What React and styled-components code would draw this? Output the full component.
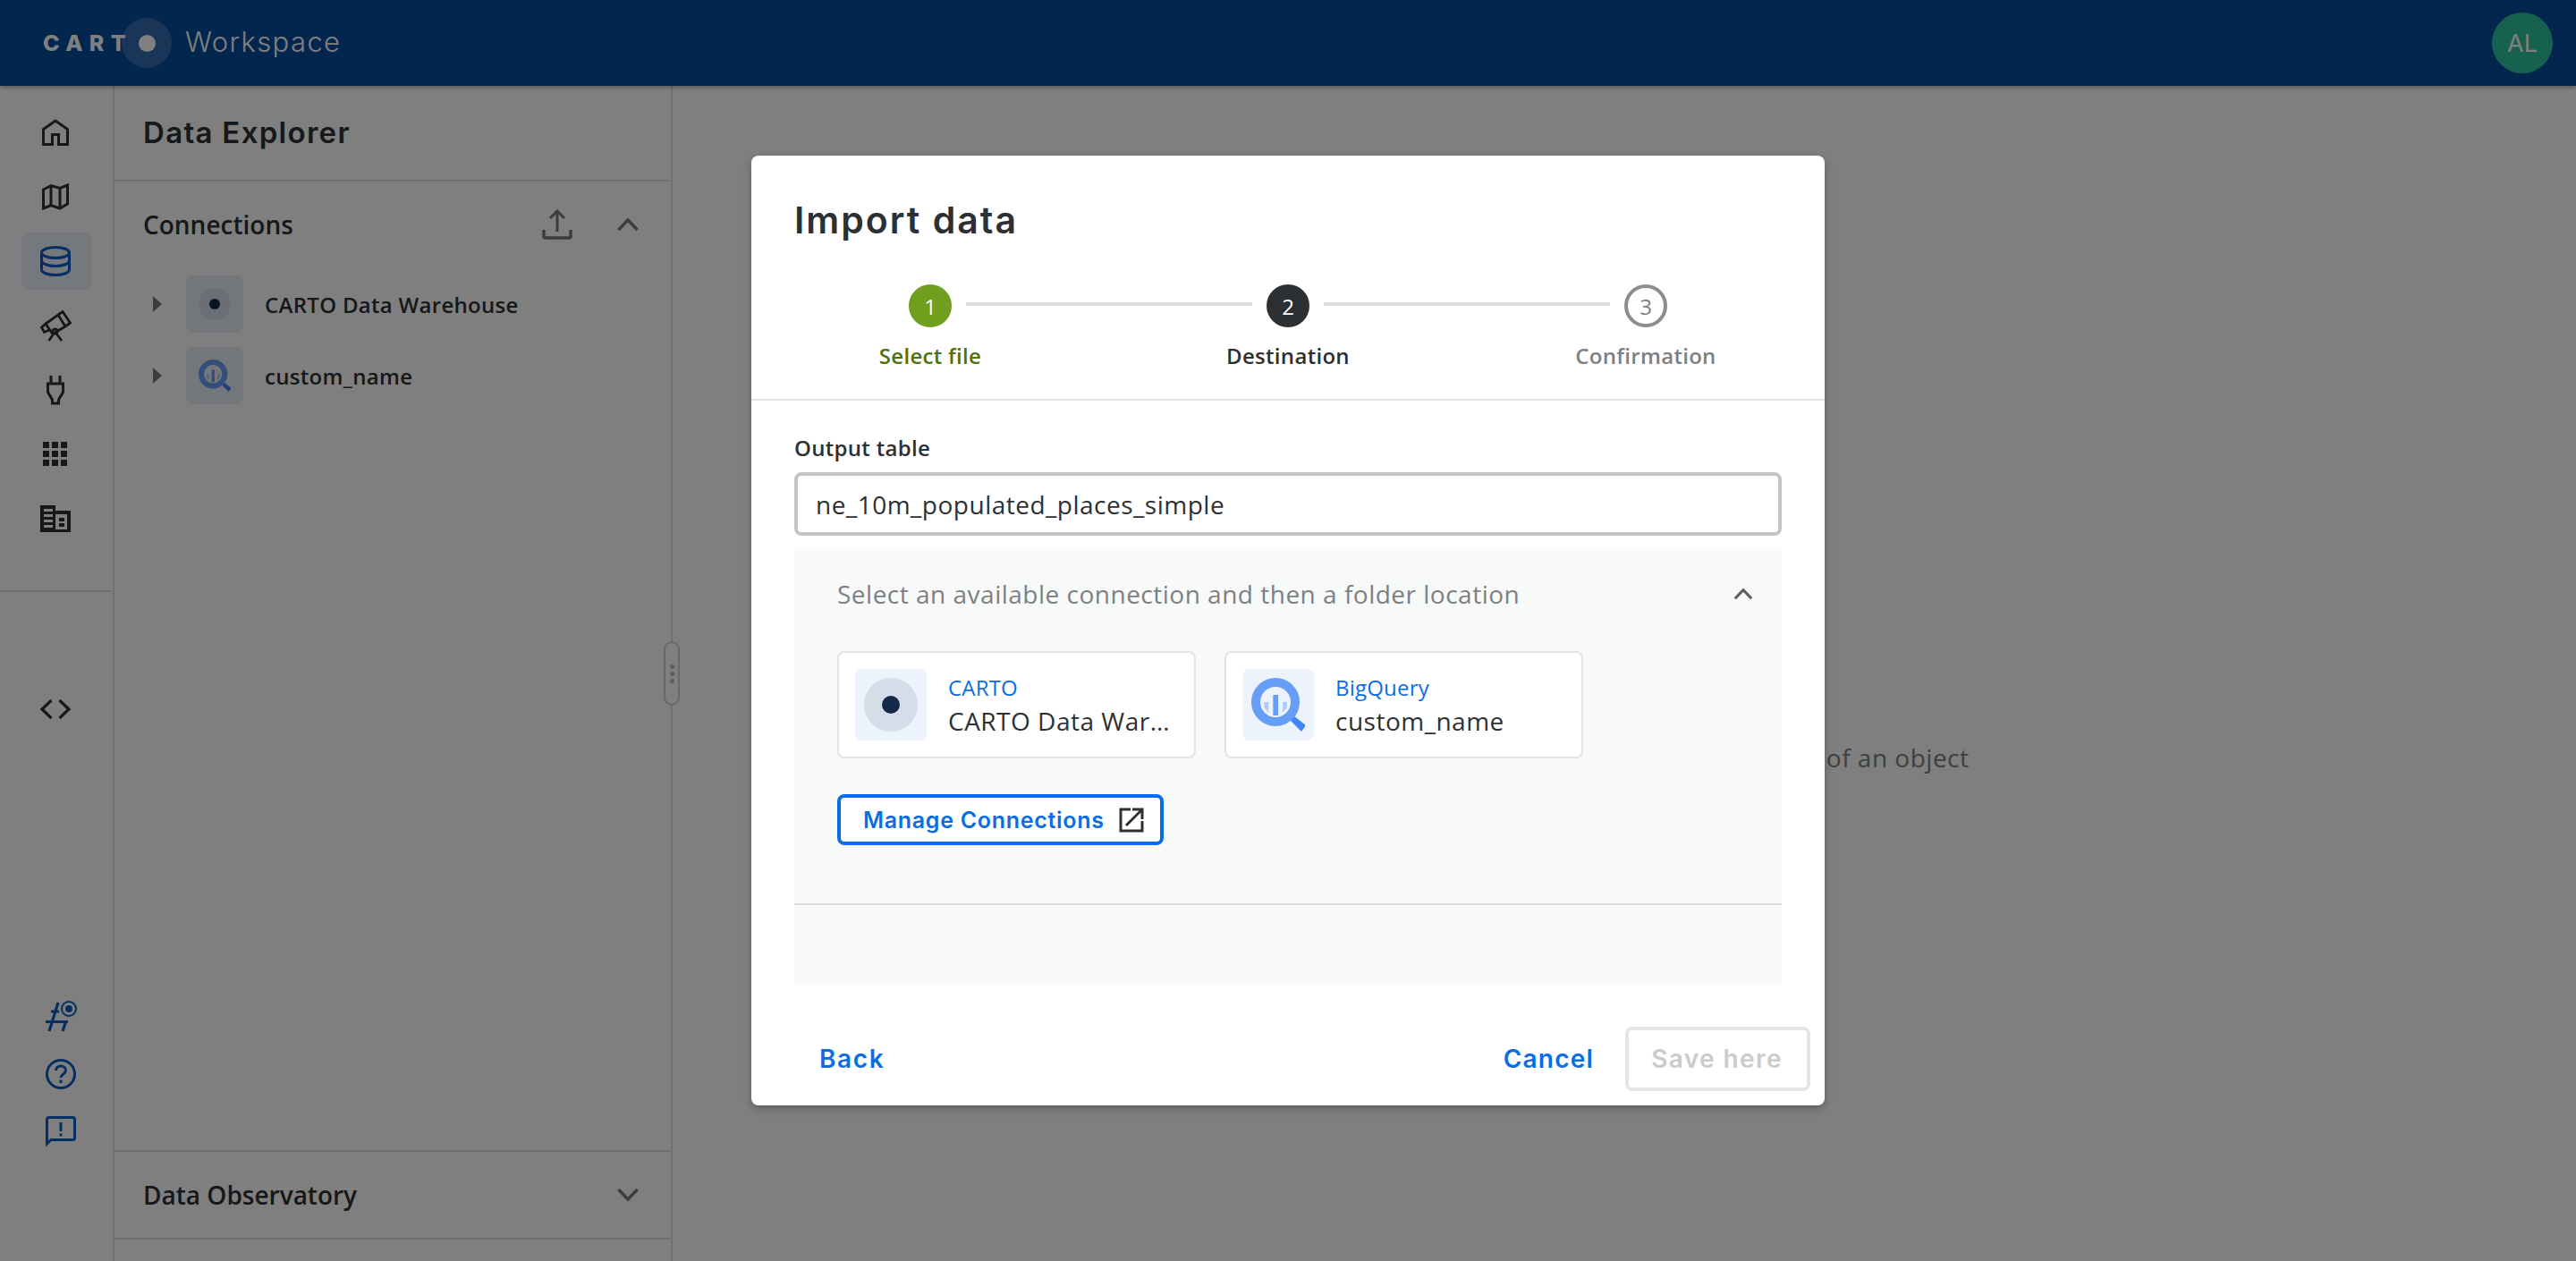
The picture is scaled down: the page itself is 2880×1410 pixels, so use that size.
import React from 'react';
import styled, {createGlobalStyle} from 'styled-components';

const GlobalStyle = createGlobalStyle`
  html, body { margin: 0; padding: 0; height: 100%; background: #fff; }
  #root { height: 100%; }
  * { box-sizing: border-box; }
  body { font-family: "Open Sans", sans-serif; color: #2c3032; overflow: hidden; }
`;

const HEADING = '"Inter", "Open Sans", sans-serif';
const BLUE = '#0b6de6';
const NAVY = '#0a5fc4';

const Page = styled.div`
  position: relative;
  width: 2880px;
  height: 1410px;
  display: flex;
  flex-direction: column;
  overflow: hidden;
`;

const Header = styled.header`
  height: 96px;
  flex: none;
  background: #064c9f;
  display: flex;
  align-items: center;
  justify-content: space-between;
  padding: 0 26px 0 48px;
  box-shadow: 0 2px 4px rgba(0,0,0,.3);
  z-index: 1;
`;
const Brand = styled.div`
  display: flex;
  align-items: center;
`;
const LogoWord = styled.span`
  font-family: ${HEADING};
  font-weight: 800;
  font-size: 25px;
  letter-spacing: 7.4px;
  color: #fff;
  width: 96px;
  white-space: nowrap;
`;
const LogoHalo = styled.span`
  width: 56px;
  height: 56px;
  border-radius: 50%;
  background: rgba(255,255,255,.18);
  margin-left: -8px;
  display: flex;
  align-items: center;
  justify-content: center;
`;
const LogoDot = styled.span`
  width: 19px;
  height: 19px;
  border-radius: 50%;
  background: #fff;
`;
const Product = styled.span`
  font-family: ${HEADING};
  font-weight: 300;
  font-size: 31px;
  letter-spacing: 1.4px;
  color: #fff;
  margin: -3px 0 0 15px;
`;
const Avatar = styled.div`
  width: 68px;
  height: 68px;
  border-radius: 50%;
  background: #2fc29e;
  color: #fff;
  font-family: ${HEADING};
  font-size: 27px;
  display: flex;
  align-items: center;
  justify-content: center;
`;

const Body = styled.div`
  flex: 1;
  display: flex;
  min-height: 0;
`;

const Rail = styled.nav`
  width: 128px;
  flex: none;
  border-right: 2px solid #dfe1e1;
  display: flex;
  flex-direction: column;
`;
const RailTop = styled.div`
  display: flex;
  flex-direction: column;
  align-items: flex-start;
  gap: 8px;
  padding: 20px 0 48px 24px;
  border-bottom: 2px solid #dfe1e1;
`;
const RailItem = styled.div`
  width: 78px;
  height: 64px;
  border-radius: 8px;
  padding-right: 2px;
  display: flex;
  align-items: center;
  justify-content: center;
  color: ${p => (p.$active ? NAVY : '#2c3032')};
  background: ${p => (p.$active ? '#eaf1fb' : 'transparent')};
`;
const RailMiddle = styled.div`
  display: flex;
  padding: 99px 0 0 24px;
`;
const RailBottom = styled.div`
  margin-top: auto;
  display: flex;
  flex-direction: column;
  gap: 30px;
  padding: 0 0 128px 51px;
  color: ${NAVY};
`;

const Panel = styled.aside`
  width: 624px;
  flex: none;
  border-right: 2px solid #dfe1e1;
  display: flex;
  flex-direction: column;
`;
const PanelTitle = styled.div`
  height: 107px;
  flex: none;
  padding: 0 0 2px 32px;
  border-bottom: 2px solid #dfe1e1;
  display: flex;
  align-items: center;
  font-family: ${HEADING};
  font-weight: 600;
  font-size: 33px;
  letter-spacing: 1.3px;
`;
const SectionRow = styled.div`
  display: flex;
  align-items: center;
  justify-content: space-between;
  height: ${p => p.$height}px;
  padding: 0 36px 0 32px;
  font-size: 28px;
  font-weight: 600;
  color: #2c3032;
`;
const SectionActions = styled.div`
  display: flex;
  align-items: center;
  gap: 50px;
  color: #747a7d;
`;
const Tree = styled.div`
  display: flex;
  flex-direction: column;
  gap: 16px;
  padding: 9px 0 0 43px;
`;
const TreeRow = styled.div`
  display: flex;
  align-items: center;
  font-size: 24px;
  font-weight: 600;
  letter-spacing: .3px;
`;
const Caret = styled.span`
  width: 0;
  height: 0;
  border-left: 10px solid #747a7d;
  border-top: 9px solid transparent;
  border-bottom: 9px solid transparent;
  margin-right: 27px;
`;
const TreeTile = styled.span`
  width: 64px;
  height: 64px;
  border-radius: 8px;
  background: #e7eef8;
  display: flex;
  align-items: center;
  justify-content: center;
  margin-right: 24px;
`;
const PanelSpacer = styled.div`
  flex: 1;
`;
const PanelFoot = styled.div`
  border-top: 2px solid #dfe1e1;
  border-bottom: 2px solid #dfe1e1;
  margin-bottom: 24px;
`;

const Main = styled.main`
  flex: 1;
  position: relative;
  display: flex;
  justify-content: center;
  padding-top: 732px;
  font-size: 28px;
  letter-spacing: .5px;
  color: #7c8082;
`;
const Handle = styled.div`
  position: absolute;
  left: -10px;
  top: 621px;
  width: 18px;
  height: 72px;
  border: 2px solid #cfd2d2;
  border-radius: 9px;
  background: #fff;
  display: flex;
  flex-direction: column;
  align-items: center;
  justify-content: center;
  gap: 3px;
  & > span {
    width: 5px;
    height: 5px;
    border-radius: 50%;
    background: #b5b9ba;
  }
`;

const Overlay = styled.div`
  position: absolute;
  inset: 0;
  z-index: 5;
  background: rgba(0,0,0,.5);
  display: flex;
  align-items: center;
  justify-content: center;
`;
const Modal = styled.section`
  width: 1200px;
  height: 1062px;
  background: #fff;
  border-radius: 8px;
  box-shadow: 0 4px 10px rgba(0,0,0,.25);
  display: flex;
  flex-direction: column;
`;
const ModalTitle = styled.h2`
  margin: 48px 48px 48px;
  font-family: ${HEADING};
  font-weight: 600;
  font-size: 41px;
  line-height: 48px;
  letter-spacing: 2px;
  color: #2c3032;
`;
const Stepper = styled.div`
  display: grid;
  grid-template-columns: repeat(3, 400px);
  padding-bottom: 32px;
  border-bottom: 2px solid #e2e4e4;
`;
const Step = styled.div`
  display: flex;
  flex-direction: column;
  align-items: stretch;
`;
const StepTrack = styled.div`
  display: flex;
  align-items: center;
  gap: 16px;
`;
const StepLine = styled.span`
  flex: 1;
  height: 4px;
  margin-bottom: 4px;
  background: ${p => (p.$hidden ? 'transparent' : '#dcdede')};
`;
const stepColors = {
  done: {bg: '#709f1d', border: '#709f1d', num: '#fff', label: '#4f7013'},
  active: {bg: '#2c3032', border: '#2c3032', num: '#fff', label: '#2c3032'},
  todo: {bg: '#fff', border: '#8a8e8f', num: '#7c8082', label: '#7c8082'},
};
const StepCircle = styled.span`
  width: 48px;
  height: 48px;
  flex: none;
  border-radius: 50%;
  border: 4px solid ${p => stepColors[p.$state].border};
  background: ${p => stepColors[p.$state].bg};
  color: ${p => stepColors[p.$state].num};
  font-size: 24px;
  font-weight: 500;
  display: flex;
  align-items: center;
  justify-content: center;
`;
const StepLabel = styled.span`
  margin-top: 16px;
  text-align: center;
  font-size: 24px;
  line-height: 32px;
  font-weight: 600;
  letter-spacing: .3px;
  color: ${p => stepColors[p.$state].label};
`;
const FormBody = styled.div`
  padding: 37px 48px 0;
  display: flex;
  flex-direction: column;
`;
const FieldLabel = styled.label`
  font-size: 24px;
  line-height: 32px;
  font-weight: 600;
  letter-spacing: .3px;
  color: #2c3032;
`;
const TextField = styled.input`
  margin-top: 11px;
  width: 100%;
  height: 71px;
  border: 4px solid #c4c6c6;
  border-radius: 8px;
  padding: 0 20px;
  font-family: "Open Sans", sans-serif;
  font-size: 28px;
  letter-spacing: .5px;
  color: #2c3032;
  outline: none;
`;
const Location = styled.div`
  margin-top: 16px;
  height: 485px;
  background: #f8f9f9;
  display: flex;
  flex-direction: column;
`;
const LocationHead = styled.div`
  display: flex;
  align-items: center;
  justify-content: space-between;
  padding: 32px 32px 0 48px;
  height: 66px;
  font-size: 28px;
  line-height: 34px;
  letter-spacing: .5px;
  color: #7c8082;
`;
const Chevron = styled.svg`
  display: block;
  color: ${p => p.$color || 'currentColor'};
`;
const Cards = styled.div`
  display: flex;
  gap: 32px;
  padding: 47px 48px 0;
`;
const Card = styled.div`
  width: 401px;
  height: 120px;
  background: #fff;
  border: 2px solid #e2e4e4;
  border-radius: 8px;
  padding: 18px 18px;
  display: flex;
  align-items: center;
  gap: 24px;
`;
const CardTile = styled.span`
  width: 80px;
  height: 80px;
  flex: none;
  border-radius: 8px;
  background: #edf3fd;
  display: flex;
  align-items: center;
  justify-content: center;
`;
const CardText = styled.div`
  display: flex;
  flex-direction: column;
  min-width: 0;
`;
const CardKind = styled.span`
  font-size: 24px;
  line-height: 36px;
  letter-spacing: .2px;
  color: ${BLUE};
`;
const CardName = styled.span`
  font-size: 28px;
  line-height: 38px;
  letter-spacing: .5px;
  color: #2c3032;
  white-space: nowrap;
  overflow: hidden;
  text-overflow: ellipsis;
`;
const ManageButton = styled.button`
  align-self: flex-start;
  margin: 40px 0 0 48px;
  width: 365px;
  height: 57px;
  border: 4px solid ${BLUE};
  border-radius: 8px;
  background: #fff;
  display: flex;
  align-items: center;
  gap: 16px;
  padding: 0 0 0 25px;
  color: ${BLUE};
  font-family: ${HEADING};
  font-weight: 600;
  font-size: 25px;
  letter-spacing: .7px;
  white-space: nowrap;
  & > svg { color: #2c3032; flex: none; }
`;
const LocationRule = styled.div`
  margin-top: 65px;
  height: 2px;
  background: #d9dbdb;
`;
const Footer = styled.div`
  flex: 1;
  display: flex;
  align-items: flex-end;
  justify-content: space-between;
  padding: 0 16px 16px 76px;
`;
const TextButton = styled.button`
  height: 72px;
  border: none;
  background: none;
  padding: 0;
  color: ${BLUE};
  font-family: ${HEADING};
  font-weight: 600;
  font-size: 28px;
  letter-spacing: ${p => p.$spacing}px;
`;
const FooterRight = styled.div`
  display: flex;
  align-items: flex-end;
  gap: 35px;
`;
const SaveButton = styled.button`
  width: 207px;
  height: 72px;
  border: 4px solid #e4e6e6;
  border-radius: 8px;
  background: #fff;
  color: #c9cccc;
  font-family: ${HEADING};
  font-weight: 600;
  font-size: 28px;
  letter-spacing: 1.4px;
  padding: 0 2px 0 0;
`;

const Svg = ({size = 36, box = 36, width = 3, children}) => (
  <svg width={size} height={size} viewBox={`0 0 ${box} ${box}`} fill="none" stroke="currentColor" strokeWidth={width}>
    {children}
  </svg>
);

const HomeIcon = () => <Svg><path d="M4.5 31.5V14.5L18 5l13.5 9.5v17H21.5V20.5h-7v11z" /></Svg>;
const MapIcon = () => <Svg><path d="M4.5 10L13 5.5l10 3L31.5 5v21L23 31l-10-3.5L4.5 31zM13 5.5v22M23 8.5V31" /></Svg>;
const DbIcon = () => (
  <Svg>
    <ellipse cx="18" cy="8.5" rx="15.5" ry="6" />
    <path d="M2.5 8.5v19c0 3.3 7 6 15.5 6s15.5-2.7 15.5-6v-19M2.5 17.5c0 3.3 7 6 15.5 6s15.5-2.7 15.5-6" />
  </Svg>
);
const ScopeIcon = () => (
  <Svg width={2.8}>
    <path d="M7 16L21 6l8 13-14 8.5zM21 6l5-3.5 8.5 12.5-5.5 4M7 16l-4.5 4 3 5.5 5.5-2.5" />
    <circle cx="17.5" cy="24.5" r="2.5" />
    <path d="M16 27L10.5 35M19 27l6 8" />
  </Svg>
);
const PlugIcon = () => (
  <Svg>
    <path d="M13 2v9M23 2v9" />
    <path d="M9.5 11h17v9.5L21.5 29v4h-7v-4l-5-8.5z" />
  </Svg>
);
const GridIcon = () => (
  <svg width="36" height="36" viewBox="0 0 36 36" fill="currentColor">
    {[4, 14, 24].map(y => [4, 14, 24].map(x => <rect key={`${x}-${y}`} x={x} y={y} width="7" height="7" />))}
  </svg>
);
const BuildingIcon = () => (
  <svg width="36" height="36" viewBox="0 0 36 36" fill="currentColor">
    <path fillRule="evenodd" d="M1 3h17v6h17v24H1zM5 7v3h10V7zM5 13v3h10v-3zM5 19v3h10v-3zM5 25v3h10v-3zM18 13v17h13V13z" />
    <rect x="22" y="17" width="6" height="4" />
    <rect x="22" y="23" width="6" height="4" />
  </svg>
);
const CodeIcon = () => <Svg width={3.2}><path d="M13.5 8L3 18l10.5 10M22.5 8L33 18 22.5 28" /></Svg>;
const HashIcon = () => (
  <svg width="36" height="36" viewBox="0 0 36 36" fill="none" stroke="currentColor">
    <path d="M14 3L4 35M6 13h9M0 24.5h25M22.5 24.5L19 35" strokeWidth="3.2" />
    <circle cx="26" cy="10" r="8" strokeWidth="2" />
    <circle cx="26" cy="10" r="4" fill="currentColor" stroke="none" />
  </svg>
);
const HelpIcon = () => (
  <Svg size={34} box={34}>
    <circle cx="17" cy="17" r="15.5" />
    <path d="M11.5 13c0-3 2.4-5 5.5-5s5.5 2 5.5 5c0 4-5.5 4-5.5 8" />
    <path d="M17 23.5v3.5" />
  </Svg>
);
const FeedbackIcon = () => (
  <Svg size={34} box={34}>
    <path d="M1.5 31V3.5a2 2 0 0 1 2-2h27a2 2 0 0 1 2 2v21a2 2 0 0 1-2 2H6z" />
    <path d="M17 7v10M17 19.5v3" />
  </Svg>
);
const UploadIcon = () => (
  <Svg size={34} box={34}>
    <path d="M17 25V3M9 10l8-8 8 8" />
    <path d="M2 23v7a2 2 0 0 0 2 2h26a2 2 0 0 0 2-2v-7" strokeWidth="3.5" />
  </Svg>
);
const ChevronUp = ({color, small}) => (
  <Chevron
    $color={color}
    width={small ? 22 : 24}
    height={small ? 14 : 16}
    viewBox="0 0 24 16"
    fill="none"
    stroke="currentColor"
    strokeWidth="3.5"
  >
    <path d="M1.5 14L12 3l10.5 11" />
  </Chevron>
);
const ChevronDown = () => (
  <Chevron width="24" height="16" viewBox="0 0 24 16" fill="none" stroke="currentColor" strokeWidth="3.5">
    <path d="M1.5 2L12 13 22.5 2" />
  </Chevron>
);
const ExternalIcon = () => (
  <svg width="28" height="28" viewBox="0 0 28 28" fill="none" stroke="currentColor" strokeWidth="3">
    <path d="M13 2H2v24h24V15M8 20L25 3M15 2h11v11" />
  </svg>
);
const CartoMark = ({size}) => (
  <svg width={size} height={size} viewBox="0 0 36 36">
    <circle cx="18" cy="18" r="18" fill="#d7dde8" />
    <circle cx="18" cy="18" r="6" fill="#14284a" />
  </svg>
);
const BigQueryMark = ({size}) => (
  <svg width={size} height={size} viewBox="0 0 60 60" fill="none">
    <path d="M43 39l18 14-5 7-17-17z" fill="#4285f4" />
    <circle cx="27" cy="27" r="22" stroke="#669df6" strokeWidth="10" />
    <rect x="24.3" y="19" width="5.7" height="23" fill="#669df6" />
    <path d="M14.3 27h5v12l-5-6zM35 27h5v6l-5 6z" fill="#aecbfa" />
  </svg>
);

const railIcons = [HomeIcon, MapIcon, DbIcon, ScopeIcon, PlugIcon, GridIcon, BuildingIcon];
const steps = [
  {num: 1, label: 'Select file', state: 'done'},
  {num: 2, label: 'Destination', state: 'active'},
  {num: 3, label: 'Confirmation', state: 'todo'},
];

const App = () => (
  <Page>
    <GlobalStyle />
    <Header>
      <Brand>
        <LogoWord>CART</LogoWord>
        <LogoHalo><LogoDot /></LogoHalo>
        <Product>Workspace</Product>
      </Brand>
      <Avatar>AL</Avatar>
    </Header>
    <Body>
      <Rail>
        <RailTop>
          {railIcons.map((Icon, i) => (
            <RailItem key={i} $active={i === 2}><Icon /></RailItem>
          ))}
        </RailTop>
        <RailMiddle>
          <RailItem><CodeIcon /></RailItem>
        </RailMiddle>
        <RailBottom>
          <HashIcon />
          <HelpIcon />
          <FeedbackIcon />
        </RailBottom>
      </Rail>
      <Panel>
        <PanelTitle>Data Explorer</PanelTitle>
        <SectionRow $height={96}>
          Connections
          <SectionActions>
            <UploadIcon />
            <ChevronUp />
          </SectionActions>
        </SectionRow>
        <Tree>
          <TreeRow>
            <Caret />
            <TreeTile><CartoMark size={36} /></TreeTile>
            CARTO Data Warehouse
          </TreeRow>
          <TreeRow>
            <Caret />
            <TreeTile><BigQueryMark size={36} /></TreeTile>
            custom_name
          </TreeRow>
        </Tree>
        <PanelSpacer />
        <PanelFoot>
          <SectionRow $height={96}>
            Data Observatory
            <SectionActions><ChevronDown /></SectionActions>
          </SectionRow>
        </PanelFoot>
      </Panel>
      <Main>
        <Handle><span /><span /><span /></Handle>
        Select a connection below to view the details of an object
      </Main>
    </Body>
    <Overlay>
      <Modal>
        <ModalTitle>Import data</ModalTitle>
        <Stepper>
          {steps.map((s, i) => (
            <Step key={s.num}>
              <StepTrack>
                <StepLine $hidden={i === 0} />
                <StepCircle $state={s.state}>{s.num}</StepCircle>
                <StepLine $hidden={i === steps.length - 1} />
              </StepTrack>
              <StepLabel $state={s.state}>{s.label}</StepLabel>
            </Step>
          ))}
        </Stepper>
        <FormBody>
          <FieldLabel>Output table</FieldLabel>
          <TextField defaultValue="ne_10m_populated_places_simple" />
          <Location>
            <LocationHead>
              Select an available connection and then a folder location
              <ChevronUp small color="#5b5f61" />
            </LocationHead>
            <Cards>
              <Card>
                <CardTile><CartoMark size={60} /></CardTile>
                <CardText>
                  <CardKind>CARTO</CardKind>
                  <CardName>CARTO Data Warehouse</CardName>
                </CardText>
              </Card>
              <Card>
                <CardTile><BigQueryMark size={60} /></CardTile>
                <CardText>
                  <CardKind>BigQuery</CardKind>
                  <CardName>custom_name</CardName>
                </CardText>
              </Card>
            </Cards>
            <ManageButton>Manage Connections<ExternalIcon /></ManageButton>
            <LocationRule />
          </Location>
        </FormBody>
        <Footer>
          <TextButton $spacing={1.6}>Back</TextButton>
          <FooterRight>
            <TextButton $spacing={1.2}>Cancel</TextButton>
            <SaveButton>Save here</SaveButton>
          </FooterRight>
        </Footer>
      </Modal>
    </Overlay>
  </Page>
);

export default App;
